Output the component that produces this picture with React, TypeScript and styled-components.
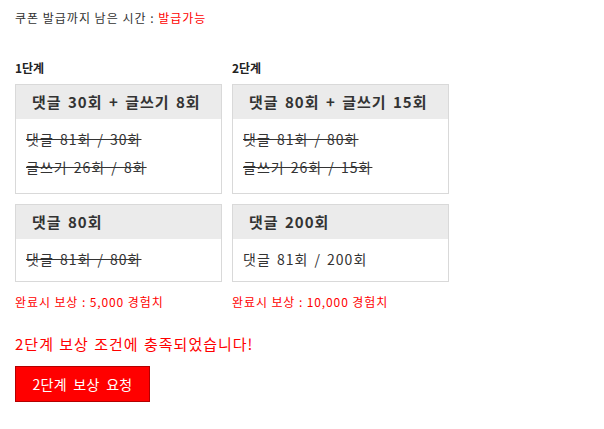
import React, {FC} from 'react';
import styled, {createGlobalStyle} from 'styled-components';

interface IMission {
    title: string;
    lines: string[];
    done: boolean;
}

interface IStage {
    label: string;
    width: number;
    missions: IMission[];
    reward: string;
}

const stages: IStage[] = [
    {
        label: '1단계',
        width: 207,
        missions: [
            {title: '댓글 30회 + 글쓰기 8회', lines: ['댓글 81회 / 30화', '글쓰기 26회 / 8화'], done: true},
            {title: '댓글 80회', lines: ['댓글 81회 / 80화'], done: true},
        ],
        reward: '완료시 보상 : 5,000 경험치',
    },
    {
        label: '2단계',
        width: 217,
        missions: [
            {title: '댓글 80회 + 글쓰기 15회', lines: ['댓글 81회 / 80화', '글쓰기 26회 / 15화'], done: true},
            {title: '댓글 200회', lines: ['댓글 81회 / 200회'], done: false},
        ],
        reward: '완료시 보상 : 10,000 경험치',
    },
];

const GlobalStyle = createGlobalStyle`
    html, body {
        margin: 0;
        padding: 0;
        background: #fff;
    }
    body {
        font-family: "Noto Sans CJK KR", "Noto Sans", sans-serif;
        color: #333;
    }
`;

/** Карточка одного задания */
const MissionCard: FC<{data: IMission}> = ({data}) => (
    <Card>
        <CardHeader>{data.title}</CardHeader>
        <CardBody>
            {data.lines.map((line) => (
                <CardLine key={line} $done={data.done}>
                    {line}
                </CardLine>
            ))}
        </CardBody>
    </Card>
);

export default function App() {
    return (
        <Page>
            <GlobalStyle />
            <Timer>
                쿠폰 발급까지 남은 시간 : <Red>발급가능</Red>
            </Timer>
            <Stages>
                {stages.map((stage) => (
                    <StageColumn key={stage.label} style={{width: stage.width}}>
                        <StageLabel>{stage.label}</StageLabel>
                        <CardList>
                            {stage.missions.map((m) => (
                                <MissionCard key={m.title} data={m} />
                            ))}
                        </CardList>
                        <Reward>{stage.reward}</Reward>
                    </StageColumn>
                ))}
            </Stages>
            <Message>2단계 보상 조건에 충족되었습니다!</Message>
            <RequestButton type="button">2단계 보상 요청</RequestButton>
        </Page>
    );
}

const Page = styled.div`
    padding: 9px 15px 20px;
`;

const Timer = styled.div`
    font-size: 12px;
    line-height: 18px;
    letter-spacing: 1px;
    color: #333;
`;

const Red = styled.span`
    color: #f00;
`;

const Stages = styled.div`
    display: flex;
    gap: 10px;
    margin-top: 32px;
`;

const StageColumn = styled.div`
    display: flex;
    flex-direction: column;
`;

const StageLabel = styled.div`
    font-size: 12px;
    font-weight: bold;
    line-height: 18px;
    color: #222;
    margin-bottom: 7px;
`;

const CardList = styled.div`
    display: flex;
    flex-direction: column;
    gap: 10px;
`;

const Card = styled.div`
    border: 1px solid #d9d9d9;
    background: #fff;
`;

const CardHeader = styled.div`
    height: 34px;
    line-height: 34px;
    padding: 0 16px;
    background: #ebebeb;
    font-size: 15px;
    font-weight: bold;
    letter-spacing: 1px;
    word-spacing: 2px;
    color: #333;
    white-space: nowrap;
`;

const CardBody = styled.div`
    padding: 6px 10px 8px;
`;

const CardLine = styled.div<{$done: boolean}>`
    font-size: 14px;
    line-height: 28px;
    letter-spacing: 1px;
    word-spacing: 2px;
    color: #333;
    text-decoration: ${({$done}) => ($done ? 'line-through' : 'none')};
    white-space: nowrap;

    &:last-child:not(:only-child) {
        margin-bottom: 4px;
    }
`;

const Reward = styled.div`
    margin-top: 11px;
    font-size: 12px;
    line-height: 18px;
    letter-spacing: 0.9px;
    color: #f00;
`;

const Message = styled.div`
    margin-top: 23px;
    font-size: 15px;
    line-height: 20px;
    letter-spacing: 1px;
    word-spacing: 1px;
    color: #f00;
`;

const RequestButton = styled.button`
    display: block;
    margin-top: 12px;
    width: 135px;
    height: 36px;
    padding: 0;
    border: 1px solid #b30000;
    background: #f00;
    color: #fff;
    font-family: "Noto Sans CJK KR", "Noto Sans", sans-serif;
    font-size: 14px;
    letter-spacing: 0.3px;
    word-spacing: 3px;
    cursor: pointer;
`;
